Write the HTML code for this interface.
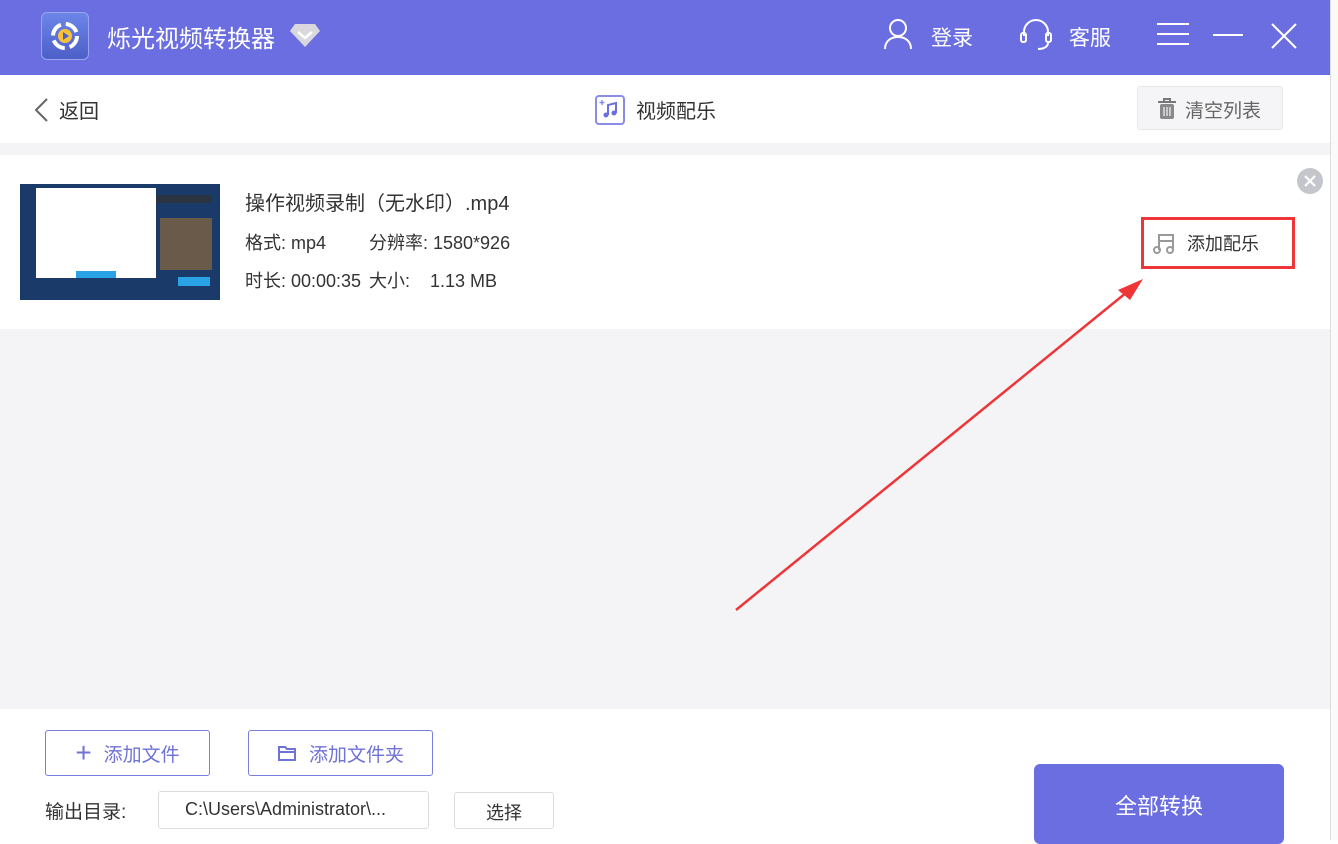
<!DOCTYPE html>
<html><head><meta charset="utf-8"><style>
*{margin:0;padding:0;box-sizing:border-box}
body{width:1338px;height:840px;overflow:hidden;background:#fff;font-family:"Liberation Sans","Noto Sans CJK SC",sans-serif;position:relative}
.abs{position:absolute}
.hdr{left:0;top:0;width:1330px;height:75px;background:#6b6ee0}
.w{color:#fff;font-size:22px}
.gray{background:#f4f4f6}
.btn{border:1px solid #7b7fdc;border-radius:3px;color:#6f72d6;font-size:19px;display:flex;align-items:center;justify-content:center;background:#fff}
</style></head><body>
<div class="abs hdr"></div>
<div class="abs" style="left:1330px;top:0;width:8px;height:840px;background:#fafafa;border-left:1px solid #ddd"></div>
<div class="abs" style="left:41px;top:12px;width:48px;height:48px;border-radius:6px;background:linear-gradient(#6c86e8,#4d5fc8);border:1px solid #9aa6f0"></div>
<svg class="abs" style="left:41px;top:12px" width="48" height="48"><circle cx="24" cy="24" r="12" fill="none" stroke="#fff" stroke-width="4" stroke-dasharray="14 5"/><circle cx="24" cy="24" r="7" fill="#f7c23a"/><path d="M22 20 L28 24 L22 28Z" fill="#4d5fc8"/></svg>
<div class="abs w" style="left:107px;top:19px;font-size:24px">烁光视频转换器</div>
<svg class="abs" style="left:289px;top:22px" width="32" height="26"><path d="M6 2h20l5 7-15 16L1 9z" fill="#d8d8de"/><path d="M9 10l7 6 7-6" stroke="#fff" stroke-width="2.5" fill="none"/></svg>
<svg class="abs" style="left:883px;top:18px" width="30" height="32"><circle cx="15" cy="10" r="8" fill="none" stroke="#fff" stroke-width="2"/><path d="M2 31c0-8 6-12 13-12s13 4 13 12" fill="none" stroke="#fff" stroke-width="2"/></svg>
<div class="abs w" style="left:931px;top:22px;font-size:21px">登录</div>
<svg class="abs" style="left:1019px;top:18px" width="34" height="32"><path d="M5 18v-4a12 12 0 0 1 24 0v4" fill="none" stroke="#fff" stroke-width="2"/><rect x="2" y="15" width="5" height="9" rx="2" fill="none" stroke="#fff" stroke-width="2"/><rect x="27" y="15" width="5" height="9" rx="2" fill="none" stroke="#fff" stroke-width="2"/><path d="M29 25c0 4-5 6-10 6" fill="none" stroke="#fff" stroke-width="2"/></svg>
<div class="abs w" style="left:1069px;top:22px;font-size:21px">客服</div>
<svg class="abs" style="left:1156px;top:22px" width="34" height="24"><path d="M1 2h32M1 12h32M1 22h32" stroke="#fff" stroke-width="2"/></svg>
<svg class="abs" style="left:1212px;top:22px" width="32" height="24"><path d="M1 13h30" stroke="#fff" stroke-width="2"/></svg>
<svg class="abs" style="left:1271px;top:23px" width="26" height="26"><path d="M1 1l24 24M25 1L1 25" stroke="#fff" stroke-width="2"/></svg>
<svg class="abs" style="left:33px;top:97px" width="16" height="26"><path d="M14 2L3 13l11 11" stroke="#666" stroke-width="2" fill="none"/></svg>
<div class="abs" style="left:59px;top:95px;font-size:20px;color:#333">返回</div>
<svg class="abs" style="left:595px;top:95px" width="30" height="30"><rect x="1" y="1" width="28" height="28" rx="3" fill="none" stroke="#8a8de6" stroke-width="2"/><path d="M13 20V10l8-2v10" stroke="#6b6ee0" stroke-width="2" fill="none"/><circle cx="11" cy="20" r="2.5" fill="#6b6ee0"/><circle cx="19" cy="18" r="2.5" fill="#6b6ee0"/><path d="M7 5v5M4.5 7.5h5" stroke="#8a8de6" stroke-width="1.5"/></svg>
<div class="abs" style="left:636px;top:95px;font-size:20px;color:#333">视频配乐</div>
<div class="abs" style="left:1137px;top:86px;width:146px;height:44px;background:#f5f5f7;border:1px solid #e8e8ec;border-radius:3px"></div>
<svg class="abs" style="left:1157px;top:98px" width="20" height="22"><path d="M1 4h18M7 4V1h6v3" stroke="#777" stroke-width="2" fill="none"/><rect x="3" y="6" width="14" height="15" rx="2" fill="#888"/><path d="M7 9v9M10 9v9M13 9v9" stroke="#eee" stroke-width="1.3"/></svg>
<div class="abs" style="left:1185px;top:96px;font-size:19px;color:#666">清空列表</div>
<div class="abs gray" style="left:0;top:143px;width:1330px;height:12px"></div>
<div class="abs gray" style="left:0;top:329px;width:1330px;height:380px"></div>
<div class="abs" style="left:20px;top:184px;width:200px;height:116px;background:#1a3a6a"></div>
<div class="abs" style="left:36px;top:188px;width:120px;height:90px;background:#fff"></div>
<div class="abs" style="left:156px;top:195px;width:56px;height:8px;background:#2a3440"></div>
<div class="abs" style="left:160px;top:218px;width:52px;height:52px;background:#6a5a4a"></div>
<div class="abs" style="left:76px;top:271px;width:40px;height:7px;background:#29a3e6"></div>
<div class="abs" style="left:178px;top:277px;width:32px;height:9px;background:#29a3e6"></div>
<div class="abs" style="left:245px;top:187px;font-size:20px;color:#333">操作视频录制（无水印）.mp4</div>
<div class="abs" style="left:245px;top:229px;font-size:18px;color:#333">格式: mp4</div>
<div class="abs" style="left:369px;top:229px;font-size:18px;color:#333">分辨率: 1580*926</div>
<div class="abs" style="left:245px;top:267px;font-size:18px;color:#333">时长: 00:00:35</div>
<div class="abs" style="left:369px;top:267px;font-size:18px;color:#333">大小:&nbsp;&nbsp;&nbsp; 1.13 MB</div>
<svg class="abs" style="left:1296px;top:167px" width="28" height="28"><circle cx="14" cy="14" r="13" fill="#c4c6cc"/><path d="M9 9l10 10M19 9L9 19" stroke="#fff" stroke-width="2.2"/></svg>
<div class="abs" style="left:1141px;top:217px;width:154px;height:52px;border:3px solid #ee3538"></div>
<svg class="abs" style="left:1153px;top:231px" width="22" height="24"><path d="M6 19V4h14v15M6 10h14" stroke="#999" stroke-width="2" fill="none"/><circle cx="4" cy="19" r="3" fill="none" stroke="#999" stroke-width="2"/><circle cx="17" cy="19" r="3" fill="none" stroke="#999" stroke-width="2"/></svg>
<div class="abs" style="left:1187px;top:230px;font-size:18px;color:#333">添加配乐</div>
<svg class="abs" style="left:0;top:0" width="1338" height="840"><path d="M736 610L1132 288" stroke="#ee3538" stroke-width="2.5"/><path d="M1143 279L1118 290L1130 300Z" fill="#ee3538"/></svg>
<div class="abs btn" style="left:45px;top:730px;width:165px;height:46px"><span style="font-size:28px;margin-right:12px;font-weight:300">+</span>添加文件</div>
<div class="abs btn" style="left:248px;top:730px;width:185px;height:46px"><svg width="20" height="18" style="margin-right:12px"><path d="M2 3h6l2 2h8v11H2z" fill="none" stroke="#6f72d6" stroke-width="2"/><path d="M2 8h16" stroke="#6f72d6" stroke-width="2"/></svg>添加文件夹</div>
<div class="abs" style="left:45px;top:797px;font-size:19px;color:#333">输出目录:</div>
<div class="abs" style="left:158px;top:791px;width:271px;height:38px;border:1px solid #ddd;border-radius:3px;font-size:18px;color:#333;padding:7px 0 0 26px">C:\Users\Administrator\...</div>
<div class="abs" style="left:454px;top:792px;width:100px;height:37px;border:1px solid #ddd;border-radius:3px;font-size:18px;color:#333;text-align:center;padding-top:6px">选择</div>
<div class="abs" style="left:1034px;top:764px;width:250px;height:80px;background:#6b6ee0;border-radius:6px;color:#fff;font-size:22px;text-align:center;padding-top:25px">全部转换</div>
</body></html>
